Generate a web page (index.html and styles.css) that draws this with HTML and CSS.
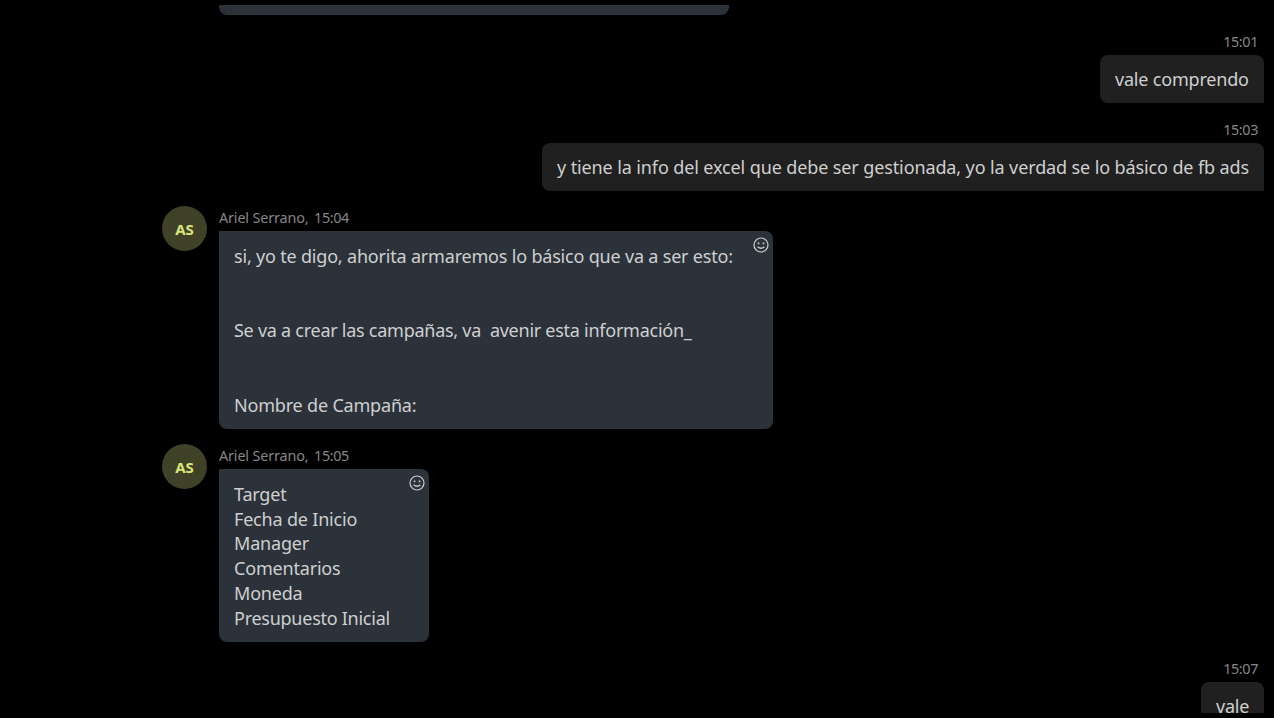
FILE: index.html
```html
<!DOCTYPE html>
<html lang="es">
<head>
<meta charset="utf-8">
<title>Chat</title>
<link rel="stylesheet" href="styles.css">
</head>
<body>
<main class="chat">
  <div class="bubble bubble-previous"></div>

  <article class="message sent">
    <div class="meta">15:01</div>
    <div class="bubble">vale comprendo</div>
  </article>

  <article class="message sent">
    <div class="meta">15:03</div>
    <div class="bubble wide">y tiene la info del excel que debe ser gestionada, yo la verdad se lo básico de fb ads</div>
  </article>

  <article class="message received">
    <div class="avatar">AS</div>
    <div class="content">
      <div class="meta">Ariel Serrano, <span class="time">15:04</span></div>
      <div class="bubble campaign">
        <p>si, yo te digo, ahorita armaremos lo básico que va a ser esto:</p>
        <p class="gap tight">Se va a crear las campañas, va &nbsp;avenir esta información_</p>
        <p class="gap">Nombre de Campaña:</p>
        <svg class="smile" viewBox="0 0 16 16"><circle cx="8" cy="8" r="7"/><path d="M4.6 9.7Q8 12.8 11.4 9.7"/><path class="eyes" d="M4.7 5.6h1.6v1.6H4.7zM9.7 5.6h1.6v1.6H9.7z"/></svg>
      </div>
    </div>
  </article>

  <article class="message received">
    <div class="avatar">AS</div>
    <div class="content">
      <div class="meta">Ariel Serrano, <span class="time">15:05</span></div>
      <div class="bubble fields">
        <p>Target</p>
        <p>Fecha de Inicio</p>
        <p>Manager</p>
        <p>Comentarios</p>
        <p>Moneda</p>
        <p class="tight">Presupuesto Inicial</p>
        <svg class="smile" viewBox="0 0 16 16"><circle cx="8" cy="8" r="7"/><path d="M4.6 9.7Q8 12.8 11.4 9.7"/><path class="eyes" d="M4.7 5.6h1.6v1.6H4.7zM9.7 5.6h1.6v1.6H9.7z"/></svg>
      </div>
    </div>
  </article>

  <article class="message sent">
    <div class="meta">15:07</div>
    <div class="bubble short">vale</div>
  </article>
</main>
</body>
</html>
```
FILE: styles.css
```css
* { box-sizing: border-box; }
html, body { margin: 0; height: 100%; background: #000; overflow: hidden; }
body { padding-top: 5px; font-family: "Noto Sans", sans-serif; }
p { margin: 0; }

.chat { height: 708px; overflow: hidden; }

.message { margin-top: 13px; }
.meta {
  height: 27px;
  font-size: 14.4px;
  line-height: 27px;
  letter-spacing: -0.15px;
  color: #868686;
  white-space: nowrap;
}
.time { margin-left: 2px; letter-spacing: -0.4px; }

.bubble {
  position: relative;
  font-size: 18px;
  line-height: 24.8px;
  letter-spacing: -0.19px;
  color: #cfcfcf;
  white-space: nowrap;
}

.sent { display: flex; flex-direction: column; align-items: flex-end; padding-right: 10px; }
.sent .meta { padding-right: 6px; letter-spacing: -0.4px; }
.sent .bubble {
  width: 164px;
  height: 48px;
  padding: 12px 15px;
  background: #202020;
  border-radius: 8px 8px 0 8px;
}
.sent .wide { width: 722px; letter-spacing: -0.115px; }
.sent .short { width: 63px; }

.received { display: flex; gap: 12px; padding-left: 162px; }
.received .bubble {
  padding: 12.8px 15px 0;
  background: #2b323a;
  border-radius: 0 8px 8px 8px;
}
.received .campaign { width: 554px; height: 198px; }
.received .fields { width: 210px; height: 173px; }
.gap { margin-top: 49.6px; }
.tight { letter-spacing: -0.26px; }

.avatar {
  width: 45px;
  height: 45px;
  margin-top: 2px;
  border-radius: 50%;
  background: #3f4227;
  color: #d8e67b;
  font-size: 15px;
  font-weight: 700;
  line-height: 47px;
  text-align: center;
}

.bubble-previous {
  width: 510px;
  height: 10px;
  margin-left: 219px;
  background: #2b323a;
  border-radius: 0 0 8px 8px;
}

.smile {
  position: absolute;
  top: 5.5px;
  right: 4.5px;
  width: 16px;
  height: 16px;
  fill: none;
  stroke: #cfcfcf;
  stroke-width: 1.2;
}
.smile .eyes { fill: #cfcfcf; stroke: none; }
```
